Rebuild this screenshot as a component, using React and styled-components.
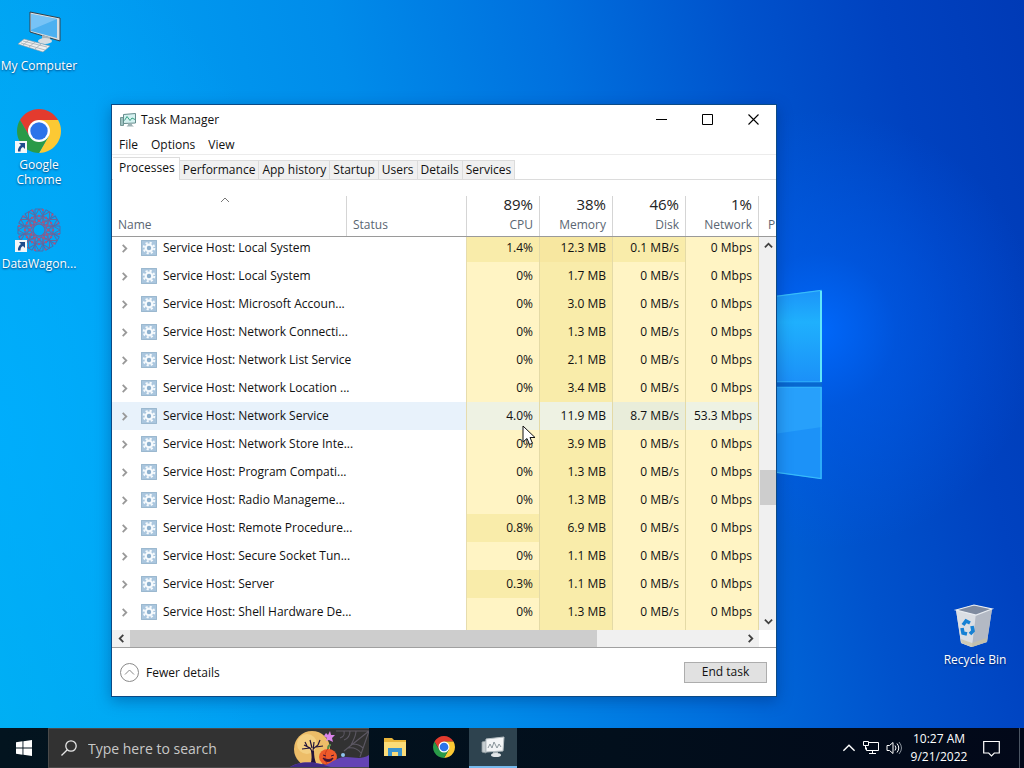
import React, { useLayoutEffect, useRef } from 'react'
import styled, { createGlobalStyle, css } from 'styled-components'


const GlobalStyle = createGlobalStyle`
  *, *::before, *::after{
    box-sizing: border-box;
  }

  body{
    margin: 0;
    overflow: hidden;
    font-family: "Open Sans", "Noto Sans", sans-serif;
    font-size: 12px;
    color: #111;
  }

  button, input{
    font: inherit;
    color: inherit;
    border: 0;
    padding: 0;
    background: none;
  }
`

const Screen = styled.div`
  position: relative;
  display: flex;
  flex-direction: column;
  width: 100%;
  height: 100vh;
  overflow: hidden;
  background:
    radial-gradient(circle 220px at 80% 43%, rgba(0, 106, 255, 0.9) 0%, rgba(0, 94, 240, 0.5) 35%, rgba(0, 80, 220, 0) 100%),
    radial-gradient(ellipse 320px 500px at 0% 55%, rgba(0, 174, 255, 0.8), rgba(0, 170, 250, 0)),
    linear-gradient(77deg, #00b0ee 0%, #009ff2 20%, #008cea 42%, #0070de 60%, #0052cc 76%, #0042c0 88%, #003ab6 100%);
`

const Wallpaper = styled.svg`
  position: absolute;
  inset: 0;
  width: 100%;
  height: 100%;
`

const Desktop = styled.main`
  position: relative;
  flex: 1;
  display: flex;
  justify-content: space-between;
  min-height: 0;
`

const ShortcutColumn = styled.div`
  display: flex;
  flex-direction: column;
  justify-content: ${({ $end }) => ($end ? 'flex-end' : 'flex-start')};
  padding: ${({ $end }) => ($end ? '0 10px 35px 0' : '0')};
`

const ShortcutButton = styled.button`
  display: flex;
  flex-direction: column;
  align-items: center;
  gap: 4px;
  width: 78px;
  height: 99px;
  padding-top: 10px;
  color: #fff;
  line-height: 15px;
  text-shadow: 0 1px 2px rgba(0, 20, 70, 0.7);

  .picture{
    position: relative;
    height: 44px;
  }

  .arrow{
    position: absolute;
    left: -2px;
    bottom: 0;
  }
`

const Window = styled.section`
  position: absolute;
  left: 111px;
  top: 104px;
  width: 666px;
  background-color: #fff;
  border: 1px solid #0b4a86;
  box-shadow: 0 4px 14px rgba(0, 30, 90, 0.35);
`

const TitleBar = styled.header`
  display: flex;
  align-items: center;
  height: 29px;
  padding-left: 8px;

  h1{
    flex: 1;
    margin: 0 0 0 5px;
    font-size: 12px;
    font-weight: 400;
  }
`

const CaptionButton = styled.button`
  display: grid;
  place-items: center;
  width: 46px;
  height: 28px;
`

const MenuBar = styled.nav`
  display: flex;
  gap: 13px;
  height: 21px;
  padding-left: 7px;
  border-bottom: 1px solid #ececec;
  line-height: 22px;
`

const TabList = styled.div`
  display: flex;
  align-items: flex-end;
  height: 25px;
  padding-left: 1px;
  border-bottom: 1px solid #dcdcdc;
`

const Tab = styled.button`
  height: 19px;
  padding: 0 3px;
  background-color: #f0f0f0;
  border: 1px solid #dcdcdc;
  border-left: 0;
  border-bottom: 0;
  line-height: 18px;

  ${({ $active }) => $active && css`
    height: 23px;
    margin-bottom: -1px;
    padding: 0 4px 2px 6px;
    background-color: #fff;
    line-height: 20px;
  `}
`

const Processes = styled.div`
  display: grid;
  grid-template-columns: 1fr 17px;
  grid-template-rows: 57px 393px 17px;
  border-bottom: 1px solid #a0a0a0;
`

const TableView = styled.div`
  grid-area: 1 / 1 / 3 / 3;
  overflow: hidden;
`

const Table = styled.table`
  width: 100%;
  table-layout: fixed;
  border-collapse: separate;
  border-spacing: 0;
`

const HeadCell = styled.th`
  position: sticky;
  top: 0;
  z-index: 1;
  width: ${({ $width }) => $width};
  height: 57px;
  padding: 16px 0 0;
  background-color: #fff;
  border-bottom: 1px solid #9a9a9a;
  font-weight: 400;
  vertical-align: top;
  color: #5a6672;

  .head{
    display: flex;
    flex-direction: column;
    justify-content: flex-end;
    height: 40px;
    padding: ${({ $last }) => ($last ? '0 0 3px 9px' : '0 6px 3px')};
    border-right: 1px solid ${({ $last }) => ($last ? 'transparent' : '#d5d5d5')};
    line-height: 16px;
    text-align: ${({ $numeric }) => ($numeric ? 'right' : 'left')};
  }

  strong{
    margin-bottom: 4px;
    font-size: 15px;
    font-weight: 400;
    line-height: 17px;
    color: #222;
  }

  .sort{
    display: grid;
    align-self: center;
    margin: 0 8px 12px 0;
  }
`

const Row = styled.tr`
  height: 28px;
  background-color: ${({ $hover }) => ($hover ? '#e8f2fb' : '#fff')};
`

const NameCell = styled.td`
  padding: 0;

  .name{
    display: flex;
    align-items: center;
    padding-left: 8px;
    white-space: nowrap;
  }

  button{
    display: grid;
    width: 9px;
    margin-right: 12px;
  }

  .gear{
    flex-shrink: 0;
    margin-right: 6px;
  }

  span{
    padding-bottom: 2px;
  }
`

const heat = {
  low: '#fff4c4',
  mid: '#f9ecaa',
  high: '#f7e7a0',
  lowHover: '#eef2e3',
  midHover: '#e9edda',
}

const StatusCell = styled.td`
  padding: 0;
  border-right: 1px solid #e6dcae;
`

const ValueCell = styled.td`
  padding: 0 6px 2px 0;
  background-color: ${({ $heat }) => heat[$heat]};
  border-right: 1px solid #e4daa6;
  text-align: right;
  white-space: nowrap;
`

const VerticalScroll = styled.div`
  grid-area: 2 / 2;
  z-index: 2;
  display: grid;
  grid-template-rows: 17px 216fr 35px 108fr 17px;
  padding-left: 1px;
  background-color: #f0f0f0;
`

const HorizontalScroll = styled.div`
  grid-area: 3 / 1;
  display: grid;
  grid-template-columns: 18px 467fr 144fr 18px;
  background-color: #f0f0f0;
`

const ScrollButton = styled.button`
  display: grid;
  place-items: center;
`

const Thumb = styled.div`
  background-color: #cdcdcd;
`

const Footer = styled.footer`
  display: flex;
  align-items: center;
  justify-content: space-between;
  height: 48px;
  padding: 0 9px 0 8px;
`

const DetailsButton = styled.button`
  display: flex;
  align-items: center;
  gap: 7px;
`

const EndButton = styled.button`
  width: 83px;
  height: 21px;
  background-color: #e1e1e1;
  border: 1px solid #adadad;
  line-height: 18px;
`

const Pointer = styled.svg`
  position: absolute;
  left: 522px;
  top: 425px;
`

const TaskBar = styled.footer`
  position: relative;
  display: flex;
  height: 40px;
  color: #fff;
  background: linear-gradient(90deg, #03141f, #020f1c 60%, #020819);
`

const StartButton = styled.button`
  display: grid;
  place-items: center;
  width: 48px;
`

const SearchBox = styled.label`
  display: flex;
  align-items: center;
  width: 321px;
  margin-right: 2px;
  padding-left: 12px;
  background-color: #323232;
  border: 1px solid #4a4a4a;
  border-right: 0;

  input{
    flex: 1;
    min-width: 0;
    margin-left: 11px;
    outline: 0;
    font-size: 14px;
  }

  input::placeholder{
    color: #c8c8c8;
    opacity: 1;
  }
`

const AppButton = styled.button`
  display: grid;
  place-items: center;
  width: 48px;
  margin-right: 1px;
  border-bottom: 2px solid transparent;

  ${({ $active }) => $active && css`
    background-color: #2e434f;
    border-color: #76b9ed;
  `}
`

const Tray = styled.div`
  display: flex;
  align-items: center;
  gap: 7px;
  margin-left: auto;
  padding-right: 4px;

  button{
    display: grid;
    place-items: center;
  }

  .clock{
    display: block;
    width: 60px;
    line-height: 18px;
    text-align: center;
    white-space: nowrap;
  }

  .notes{
    width: 30px;
    margin-right: 6px;
  }

  .peek{
    align-self: stretch;
    width: 1px;
    background-color: #4b5563;
  }
`

const columns = [
  { label: 'Name', width: '235px', sorted: true },
  { label: 'Status', width: '120px' },
  { label: 'CPU', total: '89%', width: '73px' },
  { label: 'Memory', total: '38%', width: '73px' },
  { label: 'Disk', total: '46%', width: '73px' },
  { label: 'Network', total: '1%', width: '73px' },
]

const processes = [
  ['Local System', '1.4%', '12.3 MB', '0.1 MB/s', '0 Mbps'],
  ['Local System', '0%', '1.7 MB', '0 MB/s', '0 Mbps'],
  ['Microsoft Accoun...', '0%', '3.0 MB', '0 MB/s', '0 Mbps'],
  ['Network Connecti...', '0%', '1.3 MB', '0 MB/s', '0 Mbps'],
  ['Network List Service', '0%', '2.1 MB', '0 MB/s', '0 Mbps'],
  ['Network Location ...', '0%', '3.4 MB', '0 MB/s', '0 Mbps'],
  ['Network Service', '4.0%', '11.9 MB', '8.7 MB/s', '53.3 Mbps'],
  ['Network Store Inte...', '0%', '3.9 MB', '0 MB/s', '0 Mbps'],
  ['Program Compati...', '0%', '1.3 MB', '0 MB/s', '0 Mbps'],
  ['Radio Manageme...', '0%', '1.3 MB', '0 MB/s', '0 Mbps'],
  ['Remote Procedure...', '0.8%', '6.9 MB', '0 MB/s', '0 Mbps'],
  ['Secure Socket Tun...', '0%', '1.1 MB', '0 MB/s', '0 Mbps'],
  ['Server', '0.3%', '1.1 MB', '0 MB/s', '0 Mbps'],
  ['Shell Hardware De...', '0%', '1.3 MB', '0 MB/s', '0 Mbps'],
]

const tabs = ['Processes', 'Performance', 'App history', 'Startup', 'Users', 'Details', 'Services']

// column 1 is memory, which is always one step warmer
function heatOf(value, column, hover) {
  const amount = parseFloat(value)
  if (hover) return column === 2 ? 'midHover' : 'lowHover'
  if (column === 1) return amount > 10 ? 'high' : 'mid'
  return amount > 0 ? 'mid' : 'low'
}

const Chevron = ({ turn = 0, size = 9, color = '#404040', width = 2 }) => (
  <svg width={size} height={size} viewBox="0 0 10 10" fill="none" stroke={color} strokeWidth={width}>
    <path d="M1 7 5 3l4 4" transform={`rotate(${turn} 5 5)`} />
  </svg>
)

const ComputerIcon = () => (
  <svg width="44" height="44" viewBox="0 0 44 44">
    <path d="M13 2 43 8v23L13 22z" fill="#d9dde0" stroke="#33424e" strokeWidth="1" />
    <path d="M14 4 40 9v19L14 21z" fill="#4cb0f0" />
    <path d="M14 4 40 9 14 20z" fill="#8accf8" opacity=".7" />
    <path d="m25 25 8 2v5l-8-1z" fill="#a9b3ba" />
    <ellipse cx="28" cy="31" rx="7" ry="3" fill="#d8dde1" />
    <path d="m7 29 26 7-7 6L1 34z" fill="#eef0f1" stroke="#8f9aa2" strokeWidth=".6" />
    <path d="m6 31 24 6M4 33l24 7M12 30l-6 5M18 32l-6 5M24 34l-6 5" stroke="#a3acb3" strokeWidth=".8" />
  </svg>
)

const ChromeIcon = ({ size = 44 }) => (
  <svg width={size} height={size} viewBox="2 2 44 44">
    <path d="M14.5 29.5 4.95 13A22 22 0 0 1 43.05 13L24 13z" fill="#e33b2e" />
    <path d="M24 13h19.05A22 22 0 0 1 24 46l9.5-16.5z" fill="#fcc934" />
    <path d="M33.5 29.5 24 46A22 22 0 0 1 4.95 13l9.55 16.5z" fill="#2a9a48" />
    <circle cx="24" cy="24" r="11" fill="#fff" />
    <circle cx="24" cy="24" r="8.7" fill="#2c74ea" />
  </svg>
)

const WagonIcon = () => (
  <svg width="44" height="44" viewBox="-22 -22 44 44" fill="none">
    {[0, 30, 60, 90, 120, 150, 180, 210, 240, 270, 300, 330].map((angle) => (
      <g key={angle} transform={`rotate(${angle})`}>
        <path d="M-4-21h8v7h-8z" stroke="#4a6cae" strokeWidth="1" />
        <path d="M0-8-4-14 0-21 4-14z" stroke="#6c6698" strokeWidth="1" />
        <path d="m-3-6 6-8M3-6l-6-8" stroke="#7f5e92" strokeWidth=".8" />
        <circle cx="4" cy="-20" r="1.100" fill="#b5507a" />
        <circle cx="0" cy="-14" r="1.200" fill="#b5507a" />
        <circle cx="0" cy="-9" r="1.200" fill="#b5507a" />
      </g>
    ))}
    <circle r="6" stroke="#7d5f91" strokeWidth="1.200" />
  </svg>
)

const BinIcon = () => (
  <svg width="44" height="44" viewBox="0 0 44 44">
    <path d="m3 6 18-5 18 4-5 33-16 5-10-4z" fill="#c9ced6" />
    <path d="m3 6 20 4-4 33-11-4z" fill="#dadee4" />
    <path d="m23 10 16-5-5 33-15 5z" fill="#b3b9c4" />
    <path d="m3 6 18-5 18 4-16 6z" fill="#7f8ba0" stroke="#e9edf2" strokeWidth="1.2" />
    <path d="m8 35 11 4 15-5-.5 4L19 43 8.500 39z" fill="#c9c3a4" opacity=".7" />
    <g fill="none" stroke="#1681d4" strokeWidth="3.600">
      <path d="m10 21 3-4 4 2" />
      <path d="m19 22 1 5-3 3" />
      <path d="m14 30-4-1-1-5" />
    </g>
  </svg>
)

const LinkArrow = () => (
  <svg className="arrow" width="12" height="12" viewBox="0 0 12 12">
    <path d="M0 0h12v12H0z" fill="#f4f6f8" />
    <path d="M4 2h6v6L8 6C6 7 5.500 8 5.500 10.500H3C2.500 8 4 5.500 6 4z" fill="#1d4b8c" />
  </svg>
)

const MonitorIcon = () => (
  <svg width="16" height="16" viewBox="0 0 16 16" fill="none">
    <path d="M.5 5.500h3v8h-3z" fill="#9fc2c0" stroke="#5f8583" strokeWidth=".8" />
    <path d="M3.500 2.500 15.500 1.500v9.500l-12 .5z" fill="#d5f1f0" stroke="#648c8c" />
    <path d="m4.500 8.500 2.500-4 3 4 2-2.500 3 1.500" stroke="#2a9a77" strokeWidth=".9" />
    <path d="M8 11.500h4v1.500l2 1.500H6.500L8 13z" fill="#9fb3b5" />
  </svg>
)

const TaskIcon = () => (
  <svg width="24" height="22" viewBox="0 0 24 22" fill="none">
    <path d="m1 6 4-1v12l-4-1z" fill="#c5cdd0" stroke="#929da1" strokeWidth=".8" />
    <path d="M5 3 23 1l-1 14-17 1z" fill="#f3f5f6" stroke="#b4bdc1" />
    <path d="m7 12 2-4 2 4 2-6 3 6 2-4 2 3" stroke="#7f8c92" strokeWidth=".9" />
    <path d="M12 16h5v2h-5z" fill="#a4adb1" />
    <ellipse cx="15" cy="19" rx="5" ry="2" fill="#e2e6e8" />
  </svg>
)

const GearIcon = () => (
  <svg className="gear" width="16" height="16" viewBox="0 0 16 16" fill="none">
    <path d="M0 0h16v16H0z" fill="#aac6de" />
    <path d="M.5 .5h15v15H.5z" stroke="#9bb8cf" />
    <circle cx="8" cy="8" r="5.300" stroke="#f6fafd" strokeWidth="2" strokeDasharray="2.160 2" />
    <circle cx="8" cy="8" r="3.300" stroke="#f6fafd" strokeWidth="2.200" fill="#8db0cd" />
  </svg>
)

const HalloweenArt = () => (
  <svg width="79" height="38" viewBox="0 0 79 38" fill="none">
    <g stroke="#5c5863" strokeWidth="1.100">
      <path d="M79 2 46 2M79 2 54 22M79 2 70 28M60 2c0 6-3 8-6 9M54 2c1 6-2 6-4 7M58 19c5-1 9 0 13 5M63 15c4 0 7 1 10 4M66 2c0 5-2 8-5 14" />
    </g>
    <circle cx="22" cy="20" r="18" fill="#edbd68" />
    <circle cx="17" cy="15" r="10" fill="#f7d78c" opacity=".7" />
    <path d="m23 24-3-5-6-3M20 19l-8 1M17 17l-2-4M23 22l1-9M23 20l5-4 2-5M26 18l7-1M22 19l-2-8" stroke="#22133a" strokeWidth="1.200" />
    <path d="M19 38c3-5 3-10 2-16h3c0 6 1 11 4 16z" fill="#22133a" />
    <path d="m36 4 2 2 2-4 1 4 4 0-3 3 1 4-4-2-3 1 1-3-3-2z" fill="#dc84ea" />
    <path d="M38 20c0-2 1-4 3-4" stroke="#598c48" strokeWidth="2" />
    <ellipse cx="38" cy="28" rx="9" ry="8" fill="#ee5a2a" />
    <path d="M38 20c-4 3-4 12 0 16" stroke="#c53d1c" />
    <path d="m33 26 3 1M41 27l3-1M33 29c4 2 7 2 10 0-1 4-8 5-10 0z" stroke="#3b1238" fill="#3b1238" />
    <circle cx="53" cy="26" r="2" fill="#8fc5ee" />
    <path d="M0 38c10-6 24-5 36-2 8-4 12-8 20-8 9 0 15 3 23-2v12z" fill="#6444b5" />
    <path d="M0 38c10-6 20-5 30-3 4 1 7 2 11 3z" fill="#3f2a86" />
  </svg>
)

const FolderIcon = () => (
  <svg width="22" height="20" viewBox="0 0 22 20">
    <path d="M0 1h8l2 2h12v16H0z" fill="#e9b53a" />
    <path d="M0 5h22v14H0z" fill="#fbdc78" />
    <path d="M4 11h14v8h-4v-4H8v4H4z" fill="#3a94cf" />
    <path d="M8 15h6v4H8z" fill="#fbdc78" />
  </svg>
)

function Shortcut({ label, icon, linked }) {
  return (
    <ShortcutButton>
      <span className='picture'>
        {icon}
        {linked && <LinkArrow />}
      </span>
      <span>{label}</span>
    </ShortcutButton>
  )
}

function ProcessTable() {
  const view = useRef(null)

  useLayoutEffect(() => {
    view.current.scrollTop = 3
  }, [])

  return (
    <Processes>
      <TableView ref={view}>
        <Table>
          <thead>
            <tr>
              {columns.map(({ label, total, width, sorted }) => (
                <HeadCell key={label} $width={width} $numeric={Boolean(total)}>
                  <div className='head'>
                    {sorted && <span className='sort'><Chevron size={10} color='#777' width={1} /></span>}
                    {total && <strong>{total}</strong>}
                    <span>{label}</span>
                  </div>
                </HeadCell>
              ))}
              <HeadCell $width='auto' $last>
                <div className='head'>P</div>
              </HeadCell>
            </tr>
          </thead>
          <tbody>
            {processes.map(([name, ...values], index) => {
              const hover = name === 'Network Service'
              return (
                <Row key={index} $hover={hover}>
                  <NameCell>
                    <div className='name'>
                      <button aria-label='Expand'><Chevron turn={90} size={9} color='#999' width={2} /></button>
                      <GearIcon />
                      <span>Service Host: {name}</span>
                    </div>
                  </NameCell>
                  <StatusCell />
                  {values.map((value, column) => (
                    <ValueCell key={column} $heat={heatOf(value, column, hover)}>{value}</ValueCell>
                  ))}
                  <td />
                </Row>
              )
            })}
            <Row>
              <td />
              <StatusCell />
              <ValueCell $heat='low' />
              <ValueCell $heat='mid' />
              <ValueCell $heat='low' />
              <ValueCell $heat='low' />
              <td />
            </Row>
          </tbody>
        </Table>
      </TableView>
      <VerticalScroll>
        <ScrollButton aria-label='Scroll up'><Chevron /></ScrollButton>
        <span />
        <Thumb />
        <span />
        <ScrollButton aria-label='Scroll down'><Chevron turn={180} /></ScrollButton>
      </VerticalScroll>
      <HorizontalScroll>
        <ScrollButton aria-label='Scroll left'><Chevron turn={-90} /></ScrollButton>
        <Thumb />
        <span />
        <ScrollButton aria-label='Scroll right'><Chevron turn={90} /></ScrollButton>
      </HorizontalScroll>
    </Processes>
  )
}

function TaskManager() {
  return (
    <Window>
      <TitleBar>
        <MonitorIcon />
        <h1>Task Manager</h1>
        <CaptionButton aria-label='Minimize'>
          <svg width="11" height="11" stroke="#000"><path d="M0 5.500h11" /></svg>
        </CaptionButton>
        <CaptionButton aria-label='Maximize'>
          <svg width="11" height="11" fill="none" stroke="#000"><path d="M.5 .5h10v10H.5z" /></svg>
        </CaptionButton>
        <CaptionButton aria-label='Close'>
          <svg width="11" height="11" stroke="#000" strokeWidth="1.100"><path d="m.5.5 10 10M10.500.5l-10 10" /></svg>
        </CaptionButton>
      </TitleBar>
      <MenuBar>
        <button>File</button>
        <button>Options</button>
        <button>View</button>
      </MenuBar>
      <TabList role='tablist'>
        {tabs.map((tab, index) => (
          <Tab key={tab} role='tab' aria-selected={index === 0} $active={index === 0}>{tab}</Tab>
        ))}
      </TabList>
      <ProcessTable />
      <Footer>
        <DetailsButton>
          <svg width="19" height="19" fill="none" stroke="#8a8a8a">
            <circle cx="9.500" cy="9.500" r="9" />
            <path d="m5 11.500 4.500-4.500 4.500 4.500" />
          </svg>
          Fewer details
        </DetailsButton>
        <EndButton>End task</EndButton>
      </Footer>
    </Window>
  )
}

function App() {
  return (
    <Screen>
      <GlobalStyle />
      <Wallpaper viewBox="0 0 1024 768" preserveAspectRatio="none">
        <defs>
          <linearGradient id="pane" x1="0" y1="0" x2="0" y2="1">
            <stop offset="0" stopColor="#1c94f8" />
            <stop offset=".35" stopColor="#1fb0fd" />
            <stop offset="1" stopColor="#1b90f8" />
          </linearGradient>
        </defs>
        <path d="M700 306 822 290v92H700z" fill="url(#pane)" />
        <path d="M700 387h122v92l-122-17z" fill="#1c92f8" />
        <path d="M700 387h122v40l-122 18z" fill="#27a0fb" />
        <path d="M700 306 821 290.500V382H700M700 387h121v91.500L700 462" fill="none" stroke="#38bdfa" strokeWidth="1.200" />
        <path d="M821 291v91" stroke="#5fe6fb" strokeWidth="2" />
        <path d="M700 384.500h122" stroke="#0868cf" strokeWidth="4" />
      </Wallpaper>
      <Desktop>
        <ShortcutColumn>
          <Shortcut label='My Computer' icon={<ComputerIcon />} />
          <Shortcut label='Google Chrome' icon={<ChromeIcon />} linked />
          <Shortcut label='DataWagon...' icon={<WagonIcon />} linked />
        </ShortcutColumn>
        <ShortcutColumn $end>
          <Shortcut label='Recycle Bin' icon={<BinIcon />} />
        </ShortcutColumn>
        <TaskManager />
        <Pointer width="14" height="21" viewBox="0 0 14 21">
          <path d="M1 1v16l4-3.500 2.500 6 3-1.200L8 12.500h5z" fill="#fff" stroke="#111" />
        </Pointer>
      </Desktop>
      <TaskBar>
        <StartButton aria-label='Start'>
          <svg width="16" height="16" viewBox="0 0 16 16" fill="#fff">
            <path d="M0 2.200 6.500 1.300v6.200H0zM7.400 1.200 16 0v7.500H7.400zM0 8.500h6.500v6.200L0 13.800zM7.400 8.500H16V16l-8.600-1.200z" />
          </svg>
        </StartButton>
        <SearchBox>
          <svg width="16" height="16" viewBox="0 0 16 16" fill="none" stroke="#e6e6e6" strokeWidth="1.300">
            <circle cx="10" cy="6" r="5.200" />
            <path d="M6.300 9.700.5 15.500" />
          </svg>
          <input type='text' placeholder='Type here to search' aria-label='Type here to search' />
          <HalloweenArt />
        </SearchBox>
        <AppButton aria-label='File Explorer'><FolderIcon /></AppButton>
        <AppButton aria-label='Google Chrome'><ChromeIcon size={22} /></AppButton>
        <AppButton aria-label='Task Manager' $active><TaskIcon /></AppButton>
        <Tray>
          <button aria-label='Hidden icons'><Chevron size={14} color='#fff' width={1} /></button>
          <button aria-label='Network'>
            <svg width="16" height="14" fill="none" stroke="#fff">
              <path d="M5.500 1.500h10v8H3.500v-3M9.500 9.500v3M6 12.500h7M.5 .5h5v4h-5zM2.500 4.500v4" />
            </svg>
          </button>
          <button aria-label='Volume'>
            <svg width="16" height="14" fill="none" stroke="#fff">
              <path d="M1 4.500h2.500L7 1.500v11L3.500 9.500H1zM9 4.500q2 2.500 0 5M11 2.500q3.500 4.500 0 9" />
              <path d="M13 1q5 6 0 12" stroke="#8a929c" />
            </svg>
          </button>
          <button className='clock'>10:27 AM<br />9/21/2022</button>
          <button className='notes' aria-label='Notifications'>
            <svg width="17" height="17" fill="none" stroke="#fff" strokeWidth="1.200">
              <path d="M.7 1.500h15.600v11.500h-5L8.500 15.800 5.700 13h-5z" />
            </svg>
          </button>
          <span className='peek' />
        </Tray>
      </TaskBar>
    </Screen>
  )
}

export default App
